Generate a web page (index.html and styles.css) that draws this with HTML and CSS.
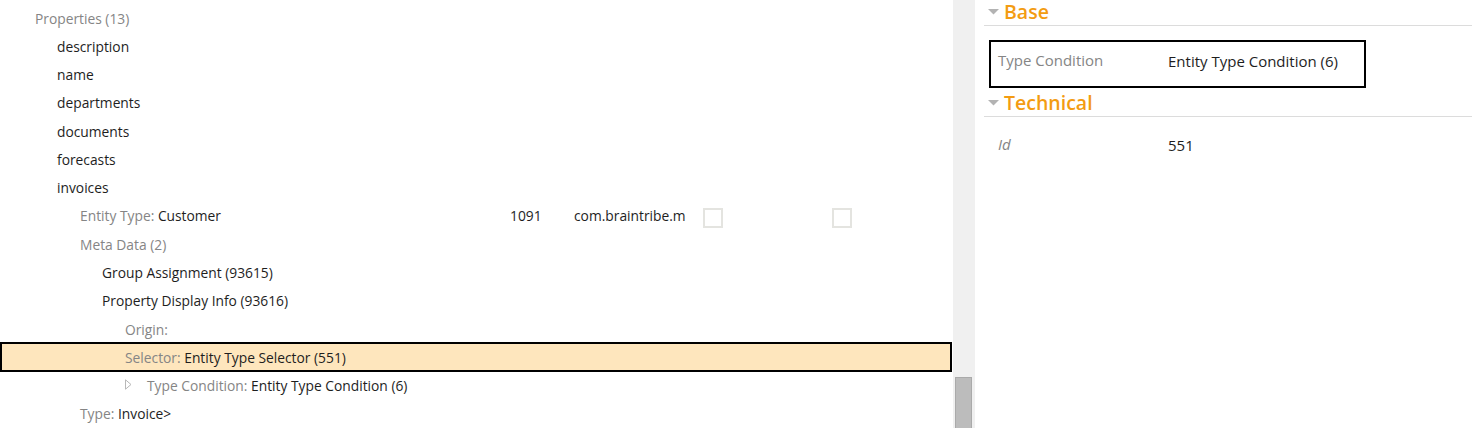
FILE: index.html
```html
<!DOCTYPE html>
<html>
<head>
<meta charset="utf-8">
<link rel="stylesheet" href="styles.css">
</head>
<body>
<div class="app">
  <div class="tree-pane">
    <div class="tree">
      <div class="row l0"><span class="lbl">Properties (13)</span></div>
      <div class="row l1"><span class="val">description</span></div>
      <div class="row l1"><span class="val">name</span></div>
      <div class="row l1"><span class="val">departments</span></div>
      <div class="row l1"><span class="val">documents</span></div>
      <div class="row l1"><span class="val">forecasts</span></div>
      <div class="row l1"><span class="val">invoices</span></div>
      <div class="row grid-row">
        <div class="cell c-name l2"><span class="lbl">Entity Type:</span>&nbsp;<span class="val">Customer</span></div>
        <div class="cell c-id"><span class="val">1091</span></div>
        <div class="cell c-pkg"><span class="val">com.braintribe.m</span></div>
        <div class="cell c-chk"><span class="chk"></span></div>
        <div class="cell c-chk"><span class="chk"></span></div>
      </div>
      <div class="row l2"><span class="lbl">Meta Data (2)</span></div>
      <div class="row l3"><span class="val">Group Assignment (93615)</span></div>
      <div class="row l3"><span class="val">Property Display Info (93616)</span></div>
      <div class="row l4"><span class="lbl">Origin:</span></div>
      <div class="row l4 selected"><span class="lbl">Selector:</span>&nbsp;<span class="val">Entity Type Selector (551)</span></div>
      <div class="row l4">
        <svg class="expander" width="7" height="11" viewBox="0 0 7 11"><path d="M0.5 0.8 L6 5.5 L0.5 10.2 Z" fill="none" stroke="#b8b8b8" stroke-width="1"/></svg>
        <span class="lbl">Type Condition:</span>&nbsp;<span class="val">Entity Type Condition (6)</span>
      </div>
      <div class="row l2"><span class="lbl">Type:</span>&nbsp;<span class="val">Invoice&gt;</span></div>
    </div>
  </div>
  <div class="scrollbar"><div class="thumb"></div></div>
  <div class="props">
    <div class="section-head first">
      <svg class="collapse" width="11" height="6" viewBox="0 0 11 6"><path d="M0 0 H11 L5.5 5.5 Z" fill="#b3b3b3"/></svg>
      <span class="section-title">Base</span>
    </div>
    <div class="prop-box">
      <span class="prop-label">Type Condition</span>
      <span class="prop-value">Entity Type Condition (6)</span>
    </div>
    <div class="section-head">
      <svg class="collapse" width="11" height="6" viewBox="0 0 11 6"><path d="M0 0 H11 L5.5 5.5 Z" fill="#b3b3b3"/></svg>
      <span class="section-title">Technical</span>
    </div>
    <div class="prop-row">
      <span class="prop-label italic">Id</span>
      <span class="prop-value">551</span>
    </div>
  </div>
</div>
</body>
</html>
```
FILE: styles.css
```css
html, body {
  margin: 0;
  padding: 0;
  background: #fff;
}
body {
  font-family: "Open Sans", "Liberation Sans", sans-serif;
  font-size: 13.8px;
  color: #1e1e1e;
  overflow: hidden;
}
.app {
  display: flex;
  height: 428px;
  overflow: hidden;
}
.tree-pane {
  width: 953px;
  flex: none;
  overflow: hidden;
}
.tree {
  padding-top: 4px;
}
.row {
  height: 28.28px;
  display: flex;
  align-items: center;
  white-space: nowrap;
  box-sizing: border-box;
}
.lbl { color: #858585; }
.val { color: #1e1e1e; }
.l0 { padding-left: 35px; }
.l1 { padding-left: 57px; }
.l2 { padding-left: 80px; }
.l3 { padding-left: 102px; }
.l4 { padding-left: 125px; }
.row.selected {
  height: 30px;
  margin: -0.86px 0;
  width: 952px;
  border: 2px solid #000;
  background: #fee6bd;
  padding-left: 123px;
}
.expander {
  margin-right: 15px;
  margin-top: -2px;
}
.grid-row {
  display: grid;
  grid-template-columns: 500px 64px 126px 129px 129px;
  align-items: center;
}
.cell {
  overflow: hidden;
  white-space: nowrap;
  display: flex;
  align-items: center;
}
.c-id { padding-left: 10px; }
.c-pkg { padding-left: 10px; padding-right: 5px; }
.c-chk { padding-left: 13px; }
.chk {
  width: 20px;
  height: 20px;
  box-sizing: border-box;
  border: 2px solid #e4e4e0;
  background: #fff;
  margin-top: 4px;
}
.scrollbar {
  width: 22px;
  flex: none;
  background: #f0f0f0;
  display: flex;
  flex-direction: column;
  justify-content: flex-end;
  padding: 0 3px 0 2px;
  box-sizing: border-box;
}
.thumb {
  height: 52px;
  margin-bottom: -1px;
  background: #bcbcbc;
  border: 1px solid #aaaaaa;
  box-sizing: border-box;
}
.props {
  flex: 1;
  padding-left: 9px;
  padding-top: 1px;
  font-size: 15px;
}
.section-head {
  display: flex;
  align-items: center;
  border-bottom: 1px solid #dcdcdc;
  padding-bottom: 2px;
  margin-top: 4px;
}
.section-head.first {
  margin-top: 0;
}
.collapse {
  margin-left: 4px;
  margin-right: 5px;
  margin-top: -1px;
}
.section-title {
  font-size: 19.5px;
  line-height: 22px;
  font-weight: 600;
  color: #f39c12;
}
.prop-box {
  margin: 14px 0 0 5px;
  width: 377px;
  height: 48px;
  box-sizing: border-box;
  border: 2px solid #000;
  padding: 8px 0 0 7px;
  display: flex;
  line-height: 20px;
}
.prop-label {
  width: 170px;
  flex: none;
  color: #858585;
}
.prop-label.italic {
  font-style: italic;
}
.prop-value {
  color: #1e1e1e;
  padding-top: 1px;
}
.prop-row {
  display: flex;
  padding: 17px 0 0 14px;
  line-height: 20px;
}
```
